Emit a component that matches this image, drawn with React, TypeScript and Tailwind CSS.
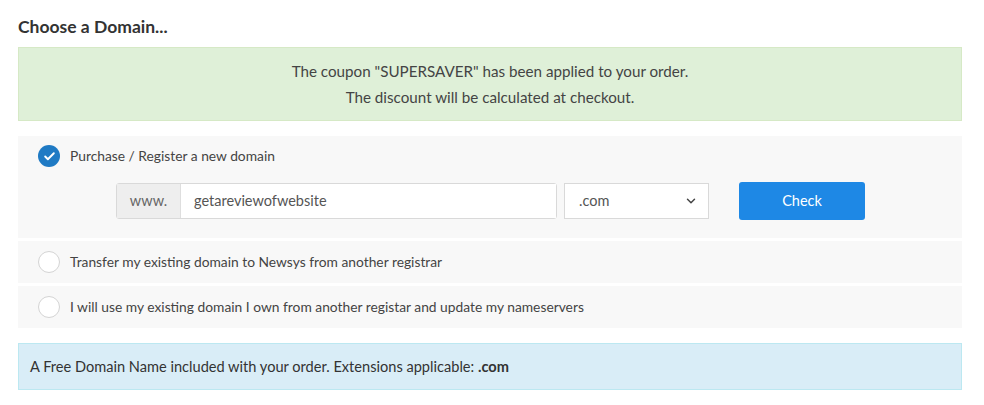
import { ChevronDown, Check } from "lucide-react";

function Radio({ checked }: { checked?: boolean }) {
  if (checked) {
    return (
      <span className="flex h-[22px] w-[22px] shrink-0 items-center justify-center rounded-full bg-[#1f7ac4]">
        <Check className="h-[13px] w-[13px] text-white" strokeWidth={3.5} />
      </span>
    );
  }
  return <span className="h-[22px] w-[22px] shrink-0 rounded-full border border-[#d4d4d4] bg-white" />;
}

export default function App() {
  return (
    <div className="min-h-screen bg-white pl-[18px] pr-[22px] pt-[16px] text-[13.8px] text-[#555] [font-family:Lato,'Noto_Sans',sans-serif]">
      <h1 className="mb-[9px] text-[17.5px] font-bold leading-[22px] text-[#333]">Choose a Domain...</h1>

      <div className="flex h-[74px] flex-col items-center justify-center gap-[7px] border border-[#d6e9c6] bg-[#dff0d8] text-[15.2px] leading-[19px] text-[#444]">
        <p>The coupon "SUPERSAVER" has been applied to your order.</p>
        <p>The discount will be calculated at checkout.</p>
      </div>

      <div className="mt-[15px] flex flex-col gap-[3px]">
        <div className="bg-[#f8f8f8] pb-[18px] pl-[20px] pr-[20px] pt-[9px]">
          <label className="flex items-center gap-[10px]">
            <Radio checked />
            <span className="text-[#444]">Purchase / Register a new domain</span>
          </label>
          <div className="mt-[15px] flex items-center pl-[78px]">
            <div className="flex h-[36px] w-[441px] rounded-[3px] border border-[#d9d9d9]">
              <span className="flex w-[64px] items-center justify-center border-r border-[#dedede] bg-[#eeeeee] text-[14.5px] text-[#666]">
                www.
              </span>
              <span className="flex flex-1 items-center bg-white px-[13px] text-[14.5px] text-[#555]">getareviewofwebsite</span>
            </div>
            <div className="ml-[7px] flex h-[36px] w-[145px] items-center justify-between border border-[#d9d9d9] bg-white pl-[14px] pr-[10px] text-[14.5px] text-[#555]">
              <span>.com</span>
              <ChevronDown className="h-[14px] w-[14px] text-[#444]" strokeWidth={2.5} />
            </div>
            <button className="ml-[30px] h-[38px] w-[126px] rounded-[3px] bg-[#1e88e5] text-[14.5px] text-white">Check</button>
          </div>
        </div>

        <label className="flex h-[42px] items-center gap-[10px] bg-[#f8f8f8] pl-[20px]">
          <Radio />
          <span className="text-[#444]">Transfer my existing domain to Newsys from another registrar</span>
        </label>
        <label className="flex h-[42px] items-center gap-[10px] bg-[#f8f8f8] pl-[20px]">
          <Radio />
          <span className="text-[#444]">I will use my existing domain I own from another registar and update my nameservers</span>
        </label>
      </div>

      <div className="mt-[15px] flex h-[47px] items-center border border-[#bce8f1] bg-[#d9edf7] pl-[11px] text-[14.6px] text-[#333]">
        A Free Domain Name included with your order. Extensions applicable:&nbsp;<strong>.com</strong>
      </div>
    </div>
  );
}
